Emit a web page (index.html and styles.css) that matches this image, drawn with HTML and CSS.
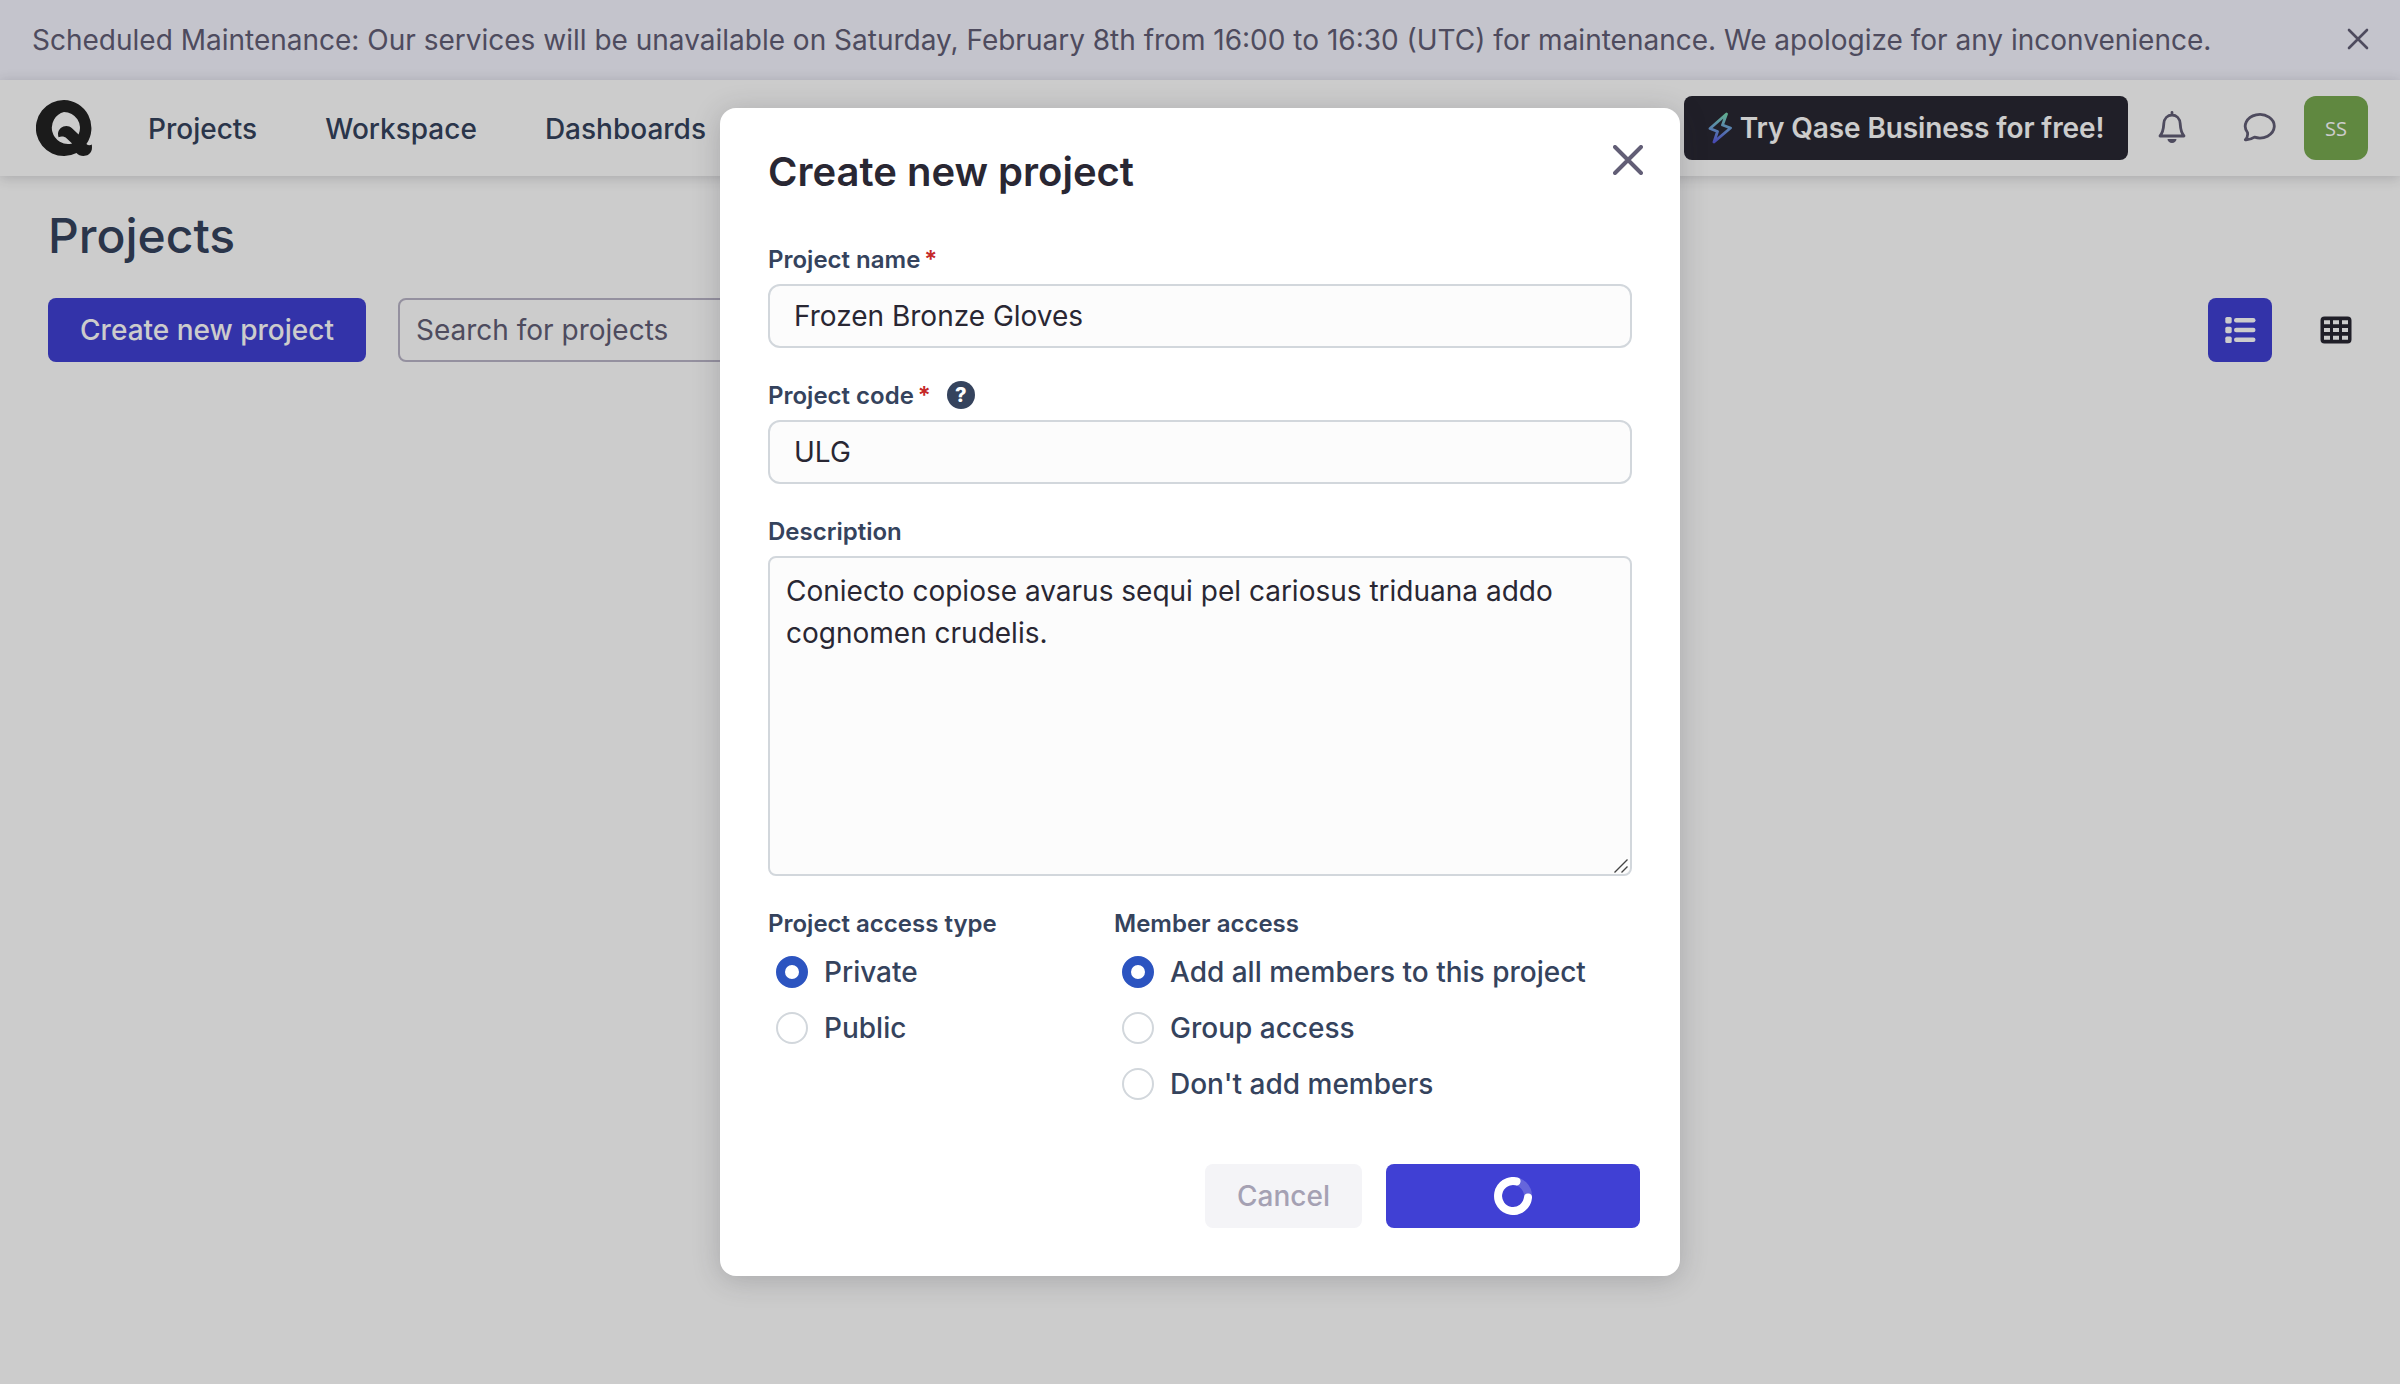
FILE: index.html
```html
<!DOCTYPE html>
<html lang="en">
<head>
<meta charset="utf-8">
<title>Projects</title>
<link rel="stylesheet" href="styles.css">
</head>
<body>
<div class="banner">
  <span class="banner-text">Scheduled Maintenance: Our services will be unavailable on Saturday, February 8th from 16:00 to 16:30 (UTC) for maintenance. We apologize for any inconvenience.</span>
  <svg class="banner-close" viewBox="0 0 24 24"><path d="M3 3l18 18M21 3L3 21"/></svg>
</div>
<header class="header">
  <svg class="logo" viewBox="0 0 56 56"><path fill-rule="evenodd" d="M28 0a28 28 0 1 0 12.5 53c2.500 3 8 4 12 1.500 3.500-2.200 3.800-6 3.300-10-1.600 1-3.800 1-5.400-.5A28 28 0 0 0 28 0zM28 12a16 16 0 0 1 14.600 22.500l-6.600-6.300c-5-4.600-13.500-1.500-14 5.500 0 1 .2 2.300.5 3.500 2.800-1.300 6.200-.8 8.300 1.200l5.300 5A16 16 0 1 1 28 12z"/></svg>
  <nav class="nav"><a>Projects</a><a>Workspace</a><a>Dashboards</a></nav>
  <div class="header-right">
    <div class="promo">
      <svg class="bolt" viewBox="0 0 24 32"><defs><linearGradient id="bolt" x1="0" y1="0" x2="0" y2="1"><stop offset="0" stop-color="#7ad9b4"/><stop offset=".5" stop-color="#6fa4dc"/><stop offset="1" stop-color="#5a5ce0"/></linearGradient></defs><path d="M18.500 2L2 16.500l7.500 3L6 30 22.500 16l-8-3z" stroke="url(#bolt)"/></svg>
      <span>Try Qase Business for free!</span>
    </div>
    <svg class="bell" viewBox="0 0 28 32"><path d="M14 1.500V4M2 25c3.500-4 3.500-8 3.800-12.500C6.200 7.500 9.500 4 14 4s7.800 3.500 8.200 8.500C22.500 17 22.500 21 26 25z"/><path class="solid" d="M9.500 28h9a4.500 4 0 0 1-9 0z"/></svg>
    <svg class="chat" viewBox="0 0 34 30"><path d="M4.500 20.500A14.500 11.800 0 1 1 11.500 25.200C8.500 27.200 5.500 28 2.300 27.800 4.200 26 5 23.500 4.500 20.500z"/></svg>
    <div class="avatar">SS</div>
  </div>
</header>
<main class="main">
  <h1 class="page-title">Projects</h1>
  <div class="toolbar">
    <div class="btn-create">Create new project</div>
    <div class="search">Search for projects</div>
    <div class="views">
      <div class="view active"><svg viewBox="0 0 32 26"><rect x="1.300" y="0" width="6.400" height="6.400" rx="1.600"/><rect x="1.300" y="9.800" width="6.400" height="6.400" rx="1.600"/><rect x="1.300" y="19.600" width="6.400" height="6.400" rx="1.600"/><rect x="10" y="1" width="21.500" height="4.400" rx="2.200"/><rect x="10" y="10.800" width="21.500" height="4.400" rx="2.200"/><rect x="10" y="20.600" width="21.500" height="4.400" rx="2.200"/></svg></div>
      <div class="view"><svg viewBox="0 0 32 28"><path fill-rule="evenodd" d="M4.500.5h23a4 4 0 0 1 4 4v19a4 4 0 0 1-4 4h-23a4 4 0 0 1-4-4v-19a4 4 0 0 1 4-4zM4 4.300v4h6v-4zM13 4.300v4h6v-4zM22 4.300v4h6v-4zM4 12v4h6v-4zM13 12v4h6v-4zM22 12v4h6v-4zM4 19.700v4h6v-4zM13 19.700v4h6v-4zM22 19.700v4h6v-4z"/></svg></div>
    </div>
  </div>
</main>
<div class="overlay">
  <section class="modal">
    <div class="modal-head">
      <h2>Create new project</h2>
      <svg class="modal-close" viewBox="0 0 30 30"><path d="M2 2l26 26M28 2L2 28"/></svg>
    </div>
    <div class="field">
      <div class="label">Project name<span class="req">*</span></div>
      <div class="input">Frozen Bronze Gloves</div>
    </div>
    <div class="field">
      <div class="label">Project code<span class="req">*</span><span class="help">?</span></div>
      <div class="input">ULG</div>
    </div>
    <div class="field">
      <div class="label">Description</div>
      <div class="textarea">Coniecto copiose avarus sequi pel cariosus triduana addo cognomen crudelis.<svg class="grip" viewBox="0 0 14 14"><path d="M.5 13.500l13-13M7.500 13.500l6-6"/></svg></div>
    </div>
    <div class="access">
      <div class="group">
        <div class="label">Project access type</div>
        <div class="option"><i class="radio on"></i>Private</div>
        <div class="option"><i class="radio"></i>Public</div>
      </div>
      <div class="group">
        <div class="label">Member access</div>
        <div class="option"><i class="radio on"></i>Add all members to this project</div>
        <div class="option"><i class="radio"></i>Group access</div>
        <div class="option"><i class="radio"></i>Don't add members</div>
      </div>
    </div>
    <div class="actions">
      <div class="cancel">Cancel</div>
      <div class="submit"><svg viewBox="0 0 38 38"><circle class="track" cx="19" cy="19" r="15"/><path d="M22.500 4.400A15 15 0 1 0 34 20.500"/></svg></div>
    </div>
  </section>
</div>
</body>
</html>
```
FILE: styles.css
```css
* { box-sizing: border-box; }
body {
  margin: 0;
  height: 1384px;
  overflow: hidden;
  background: #fff;
  font-family: Inter, "Liberation Sans", sans-serif;
  font-size: 28px;
  color: #35435d;
}
svg { display: block; flex: none; }
h1, h2 { margin: 0; }

.banner {
  display: flex;
  align-items: center;
  justify-content: space-between;
  height: 80px;
  padding: 0 32px;
  background: #f5f5ff;
  color: #625e76;
  white-space: nowrap;
}
.banner-close { width: 24px; height: 24px; margin: -2px -2px 0 0; fill: none; stroke: #625e76; stroke-width: 2.6; stroke-linecap: round; }

.header {
  position: relative;
  display: flex;
  align-items: center;
  height: 96px;
  padding: 0 32px 0 36px;
  background: #fff;
  box-shadow: 0 2px 12px rgba(41, 39, 51, .2);
}
.logo { width: 56px; height: 56px; fill: #222; }
.nav { display: flex; gap: 68px; margin-left: 56px; padding-top: 2px; font-weight: 500; }
.header-right { display: flex; align-items: center; margin-left: auto; }
.promo {
  display: flex;
  align-items: center;
  justify-content: center;
  gap: 8px;
  width: 444px;
  height: 64px;
  border-radius: 8px;
  background: #292733;
  color: #fff;
  font-weight: 600;
  letter-spacing: -.1px;
  white-space: nowrap;
}
.bolt { width: 24px; height: 32px; fill: none; stroke-width: 2.8; stroke-linejoin: round; }
.bell, .chat { fill: none; stroke: #625e76; stroke-width: 2.8; stroke-linecap: round; stroke-linejoin: round; }
.bell { width: 28px; height: 32px; margin: 0 0 2px 30px; }
.bell .solid { fill: #625e76; stroke: none; }
.chat { width: 34px; height: 30px; margin: 0 27px 2px 57px; }
.avatar {
  display: flex;
  align-items: center;
  justify-content: center;
  width: 64px;
  height: 64px;
  border-radius: 12px;
  background: #78aa50;
  color: #fff;
  font: 400 20px "Open Sans", sans-serif;
}

.main { padding: 32px 48px; }
.page-title { font-size: 48px; line-height: 56px; font-weight: 500; }
.toolbar { display: flex; margin-top: 34px; }
.btn-create, .search, .view, .cancel, .submit {
  display: flex;
  align-items: center;
  height: 64px;
  border-radius: 8px;
}
.btn-create { justify-content: center; width: 318px; background: #4040d4; color: #fff; font-weight: 500; }
.search { width: 480px; margin-left: 32px; padding-left: 16px; border: 2px solid #b9b5c7; color: #625e76; }
.views { display: flex; gap: 32px; margin-left: auto; margin-right: -16px; }
.view { justify-content: center; width: 64px; fill: #292733; }
.view svg { width: 32px; }
.view.active { background: #4040d4; fill: #fff; }

.overlay {
  position: absolute;
  inset: 0;
  padding-top: 108px;
  background: rgba(0, 0, 0, .2);
}
.modal {
  width: 960px;
  height: 1168px;
  margin: 0 auto;
  padding: 40px 48px;
  border-radius: 16px;
  background: #fff;
  box-shadow: 0 4px 28px rgba(41, 39, 51, .22);
}
.modal-head { display: flex; justify-content: space-between; height: 93px; color: #292733; }
.modal-head h2 { font-size: 40px; line-height: 48px; font-weight: 600; }
.modal-close { width: 30px; height: 30px; margin: -3px -11px 0 0; fill: none; stroke: #625e76; stroke-width: 4; stroke-linecap: round; }
.field { display: flex; flex-direction: column; gap: 7px; margin-bottom: 29px; }
.label { display: flex; align-items: center; height: 36px; font-size: 24px; font-weight: 600; }
.req { margin-left: 4px; color: #c52828; }
.help {
  display: flex;
  align-items: center;
  justify-content: center;
  width: 28px;
  height: 28px;
  margin-left: 16px;
  border-radius: 50%;
  background: #35435d;
  color: #fff;
  font-size: 20px;
  font-weight: 800;
}
.input, .textarea { border: 2px solid #d2d7dc; background: #fcfcfc; color: #292733; }
.input { display: flex; align-items: center; height: 64px; padding: 0 24px; border-radius: 12px; }
.textarea { position: relative; height: 320px; padding: 12px 16px; border-radius: 8px; line-height: 42px; }
.grip { position: absolute; right: 2px; bottom: 1px; width: 14px; height: 14px; fill: none; stroke: #444; stroke-width: 1.4; }
.access { display: grid; grid-template-columns: 346px 1fr; }
.access .label { margin-bottom: 3px; }
.option { display: flex; align-items: center; gap: 16px; height: 56px; padding-left: 8px; font-weight: 500; }
.radio { width: 32px; height: 32px; border: 2px solid #d2d7dc; border-radius: 50%; background: #fff; }
.radio.on { border: 9px solid #2c54c0; }
.actions { display: flex; justify-content: flex-end; gap: 24px; margin: 52px -8px 0 0; }
.cancel { justify-content: center; width: 157px; background: #f4f4f7; color: #a5a1b3; font-weight: 500; }
.submit { justify-content: center; width: 254px; background: #4040d4; }
.submit svg { width: 38px; height: 38px; fill: none; stroke: #fff; stroke-width: 8; stroke-linecap: round; }
.submit .track { stroke-opacity: .2; }
```
